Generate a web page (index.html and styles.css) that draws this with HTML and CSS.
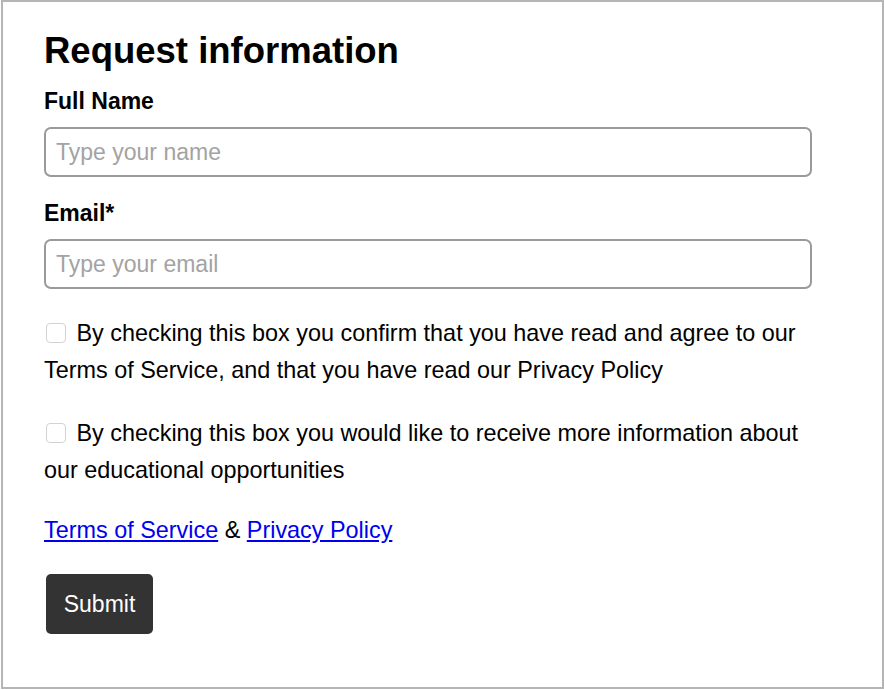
FILE: index.html
```html
<!DOCTYPE html>
<html>
<head>
    <title>Request information</title>
    <link rel="stylesheet" href="styles.css">
</head>
<body>
    <div class="frame">
        <form class="requestForm">
            <h2>Request information</h2>

            <label class="fieldLabel" for="fullName">Full Name</label>
            <input class="textInput" type="text" id="fullName" placeholder="Type your name">

            <label class="fieldLabel" for="email">Email*</label>
            <input class="textInput" type="email" id="email" placeholder="Type your email">

            <p class="consent first">
                <input class="checkBox" type="checkbox" id="agree">
                By checking this box you confirm that you have read and agree to our Terms of Service, and that you have read our Privacy Policy
            </p>

            <p class="consent">
                <input class="checkBox" type="checkbox" id="moreInfo">
                By checking this box you would like to receive more information about our educational opportunities
            </p>

            <p class="links">
                <a href="#">Terms of Service</a> &amp; <a href="#">Privacy Policy</a>
            </p>

            <button class="submitButton" type="button">Submit</button>
        </form>
    </div>
</body>
</html>
```

FILE: styles.css
```css
body {
    margin: 0;
    font-family: "Liberation Sans", Arial, sans-serif;
    color: #000;
    background: #fff;
}
.frame {
    box-sizing: border-box;
    width: 883px;
    height: 689px;
    margin-left: 1px;
    border: 2px solid #b5b5b5;
    padding: 0 41px;
}
.requestForm {
    width: 768px;
}
.requestForm h2 {
    font-size: 36.5px;
    font-weight: bold;
    margin: 28px 0 16px 0;
}
.fieldLabel {
    display: block;
    font-size: 23px;
    font-weight: bold;
    margin-bottom: 12px;
}
.textInput {
    display: block;
    box-sizing: border-box;
    width: 768px;
    height: 50px;
    margin: 0 0 23px 0;
    padding: 0 10px;
    border: 2px solid #9a9a9a;
    border-radius: 7px;
    font-family: inherit;
    font-size: 23px;
    color: #000;
    outline: none;
}
.textInput::placeholder {
    color: #a3a3a3;
}
.consent {
    font-size: 23.4px;
    line-height: 37px;
    margin: 0 0 26px 0;
}
.consent.first {
    margin-top: 26px;
}
.checkBox {
    -webkit-appearance: none;
    appearance: none;
    box-sizing: border-box;
    width: 20px;
    height: 20px;
    margin: 0 4px 0 2px;
    vertical-align: -2px;
    border: 1px solid #d2d2d2;
    border-radius: 4px;
    background: #fff;
}
.links {
    font-size: 23.4px;
    margin: 28px 0 30px 0;
}
.links a {
    color: #0000ee;
}
.submitButton {
    margin-left: 2px;
    width: 107px;
    height: 60px;
    border: none;
    border-radius: 5px;
    background-color: #333;
    color: #fff;
    font-family: inherit;
    font-size: 23px;
}
```
